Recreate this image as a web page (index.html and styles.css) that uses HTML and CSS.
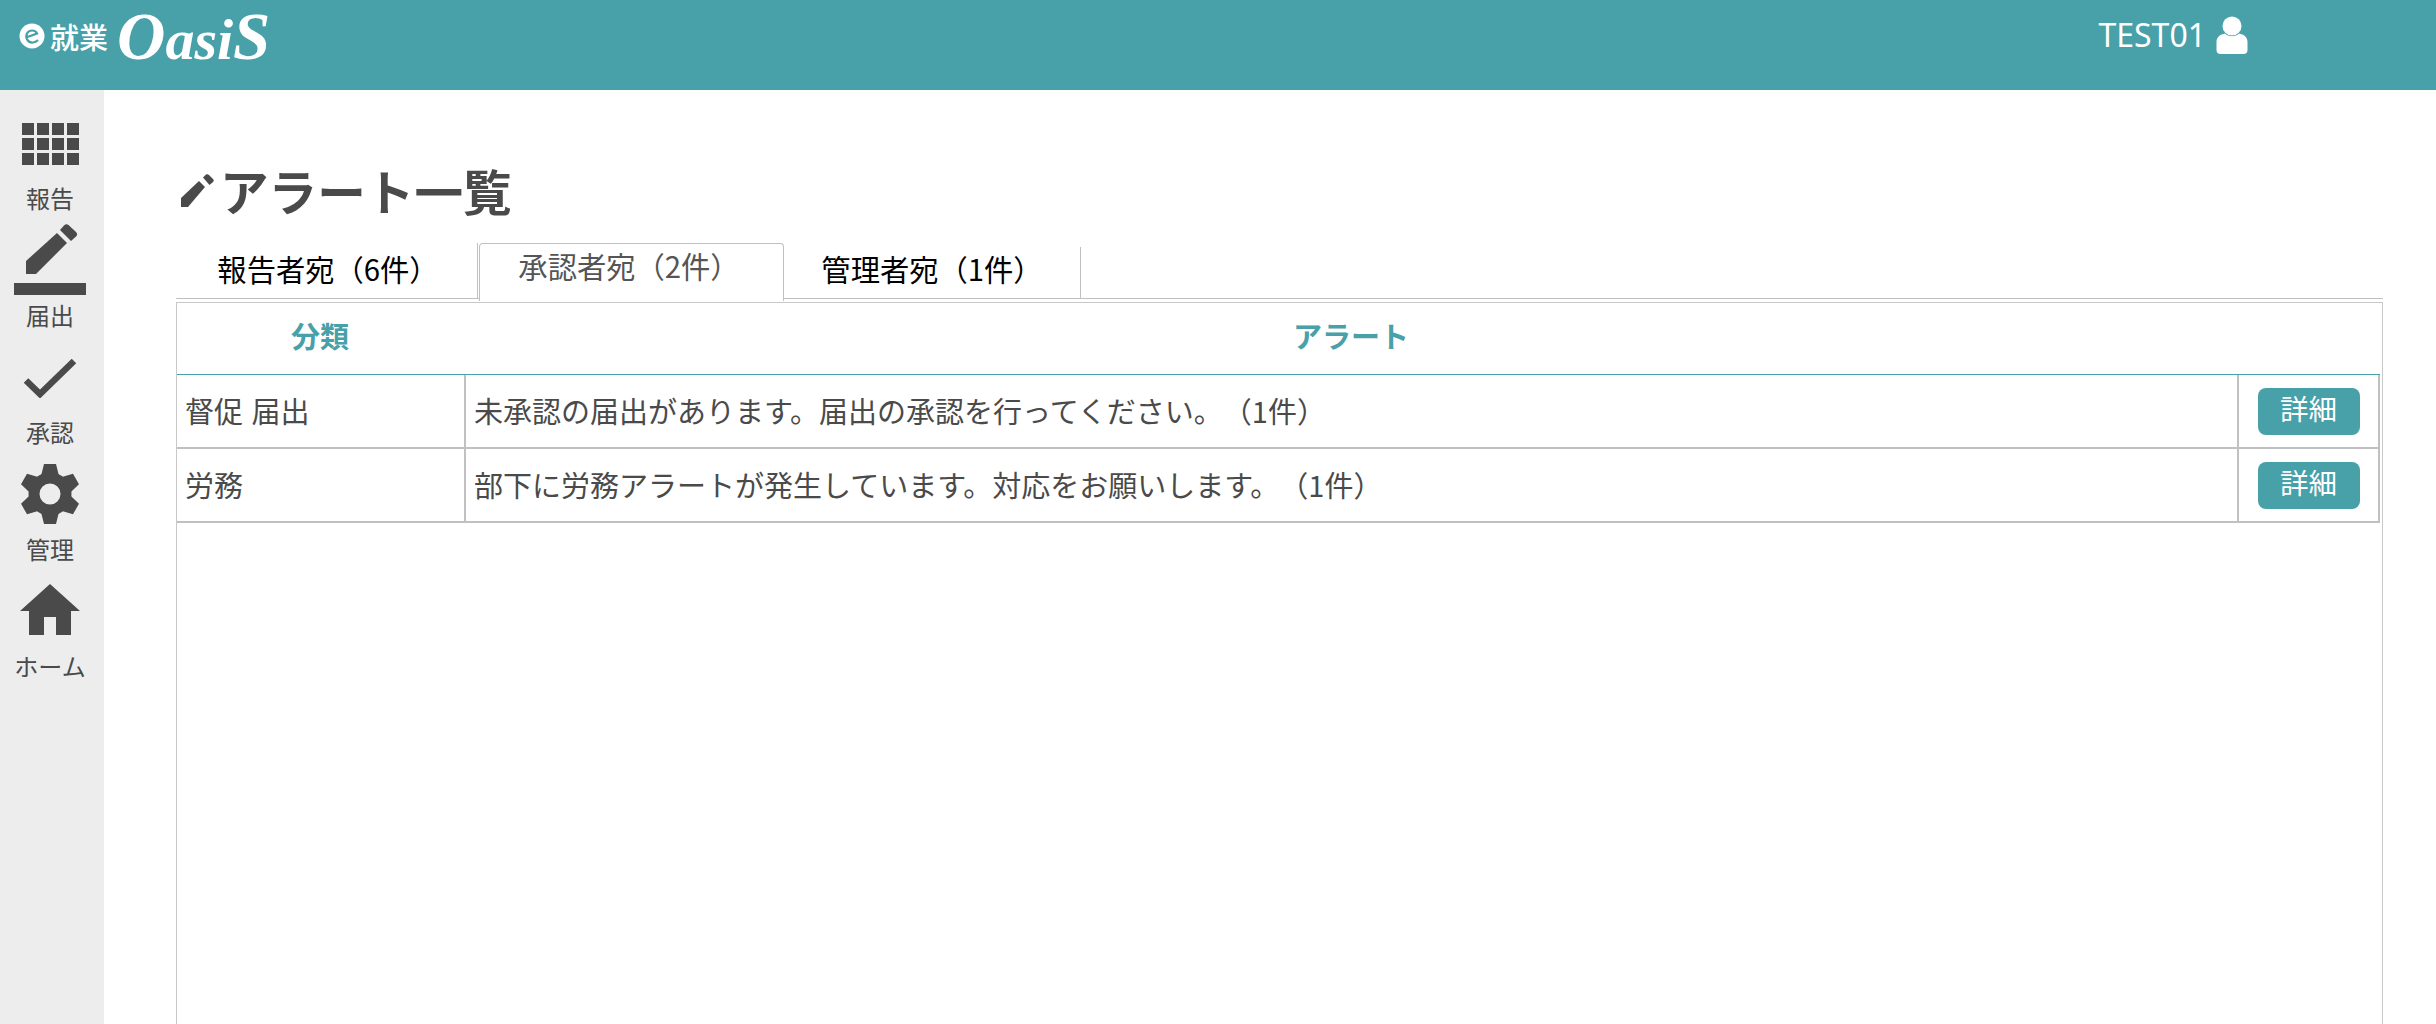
FILE: index.html
```html
<!DOCTYPE html>
<html lang="ja">
<head>
<meta charset="utf-8">
<title>アラート一覧</title>
<link rel="stylesheet" href="styles.css">
</head>
<body>
<header class="topbar">
  <div class="logo">
    <svg class="logo-e" viewBox="0 0 26 26" width="26" height="26"><circle cx="13" cy="13" r="12.500" fill="#fff"/><path d="M7 14.500 L18 10.500 C16.500 6.500 10 6.500 8 10.500 C6 15 9 20 14 19.500 C16 19.300 17.500 18.500 19 17" fill="none" stroke="#48a0a9" stroke-width="2.200"/></svg>
    <span class="logo-ja">就業</span>
    <span class="logo-en"><span class="logo-cap">O</span>asi<span class="logo-cap">S</span></span>
  </div>
  <div class="user">
    <span class="user-name">TEST01</span>
    <svg class="user-icon" viewBox="0 0 32 38" width="32" height="38"><circle cx="16" cy="10" r="9.500" fill="#fff"/><path d="M9 17.500 C12 21 20 21 23 17.500 C28 18.500 31.500 21 31.500 26 L31.500 34 C31.500 36.500 30 38 27.500 38 L4.500 38 C2 38 .5 36.500 .5 34 L.5 26 C.5 21 4 18.500 9 17.500Z" fill="#fff"/></svg>
  </div>
</header>
<div class="layout">
  <nav class="sidebar">
    <a class="nav-item">
      <span class="nav-icon nudge-down"><svg viewBox="0 0 57 42" width="57" height="42"><g fill="#4a4a4a"><rect x="0" y="0" width="12" height="12"/><rect x="15" y="0" width="12" height="12"/><rect x="30" y="0" width="12" height="12"/><rect x="45" y="0" width="12" height="12"/><rect x="0" y="15" width="12" height="12"/><rect x="15" y="15" width="12" height="12"/><rect x="30" y="15" width="12" height="12"/><rect x="45" y="15" width="12" height="12"/><rect x="0" y="30" width="12" height="12"/><rect x="15" y="30" width="12" height="12"/><rect x="30" y="30" width="12" height="12"/><rect x="45" y="30" width="12" height="12"/></g></svg></span>
      <span class="nav-label">報告</span>
    </a>
    <a class="nav-item">
      <span class="nav-icon"><svg viewBox="0 0 72 72" width="72" height="72"><g fill="#4a4a4a"><path d="M12 38 L43 10 L53 20 L22 51 L12 51Z"/><path d="M46 7 L50 2.500 C51.500 1 53 1 54.500 2 L62 9 C63.500 10.500 63.500 12 62 13.500 L57 18Z"/><rect x="0" y="60" width="72" height="12"/></g></svg></span>
      <span class="nav-label">届出</span>
    </a>
    <a class="nav-item">
      <span class="nav-icon nudge-down"><svg viewBox="0 0 54 40" width="54" height="40"><path d="M3 22.500 L17 36 L51 3" fill="none" stroke="#4a4a4a" stroke-width="6.500"/></svg></span>
      <span class="nav-label">承認</span>
    </a>
    <a class="nav-item">
      <span class="nav-icon nudge-down-small"><svg viewBox="0 0 60 60" width="60" height="60"><circle cx="30" cy="30" r="16" fill="none" stroke="#4a4a4a" stroke-width="11"/><g fill="#4a4a4a"><path d="M24 0 L36 0 L39 12 L21 12Z"/><path d="M24 0 L36 0 L39 12 L21 12Z" transform="rotate(60 30 30)"/><path d="M24 0 L36 0 L39 12 L21 12Z" transform="rotate(120 30 30)"/><path d="M24 0 L36 0 L39 12 L21 12Z" transform="rotate(180 30 30)"/><path d="M24 0 L36 0 L39 12 L21 12Z" transform="rotate(240 30 30)"/><path d="M24 0 L36 0 L39 12 L21 12Z" transform="rotate(300 30 30)"/></g></svg></span>
      <span class="nav-label">管理</span>
    </a>
    <a class="nav-item">
      <span class="nav-icon nudge-up"><svg viewBox="0 0 60 51" width="60" height="51"><path d="M30 0 L60 27 L51 27 L51 51 L36 51 L36 33 L24 33 L24 51 L9 51 L9 27 L0 27Z" fill="#4a4a4a"/></svg></span>
      <span class="nav-label">ホーム</span>
    </a>
  </nav>
  <main class="content">
    <h1 class="page-title">
      <svg viewBox="0 0 33 33" width="33" height="33"><g fill="#4a4a4a"><path d="M0 24 L18 7 L24 13 L7 33 L0 33Z"/><path d="M22 3.500 L25 .5 C26 0 27 0 28 1 L32 5 C33 6 33 7 32 8 L28.500 11Z"/></g></svg>
      <span>アラート一覧</span>
    </h1>
    <div class="tabs">
      <a class="tab tab-first">報告者宛（6件）</a>
      <a class="tab tab-active">承認者宛（2件）</a>
      <a class="tab tab-third">管理者宛（1件）</a>
    </div>
    <section class="panel">
      <table class="alerts">
        <colgroup><col class="col-kind"><col><col class="col-action"></colgroup>
        <thead>
          <tr><th>分類</th><th>アラート</th><th></th></tr>
        </thead>
        <tbody>
          <tr>
            <td class="kind">督促 届出</td>
            <td>未承認の届出があります。届出の承認を行ってください。（1件）</td>
            <td class="action"><button class="detail">詳細</button></td>
          </tr>
          <tr>
            <td class="kind">労務</td>
            <td>部下に労務アラートが発生しています。対応をお願いします。（1件）</td>
            <td class="action"><button class="detail">詳細</button></td>
          </tr>
        </tbody>
      </table>
    </section>
  </main>
</div>
</body>
</html>
```
FILE: styles.css
```css
* { box-sizing: border-box; }
html, body { height: 100%; }
body {
  margin: 0;
  overflow: hidden;
  display: flex;
  flex-direction: column;
  font-family: "Noto Sans CJK JP", "Noto Sans", sans-serif;
  text-spacing-trim: space-all;
  color: #4a4a4a;
  background: #fff;
}
.topbar {
  flex: none;
  height: 90px;
  background: #48a0a9;
  display: flex;
  justify-content: space-between;
  align-items: flex-start;
  color: #fff;
}
.logo {
  display: flex;
  align-items: center;
  height: 72px;
  padding-left: 19px;
}
.logo-e { margin-right: 5px; }
.logo-ja { font-size: 29px; font-weight: 500; line-height: 1; margin-right: 9px; }
.logo-en {
  font-family: "Liberation Serif", serif;
  font-style: italic;
  font-weight: 700;
  font-size: 58px;
  line-height: 1;
}
.logo-cap { font-size: 67px; }
.user {
  display: flex;
  align-items: center;
  gap: 10px;
  padding: 16px 188px 0 0;
}
.user-name { font-family: "Noto Sans", sans-serif; font-size: 32px; line-height: 38px; }
.layout { flex: 1; display: flex; min-height: 0; }
.sidebar {
  flex: none;
  width: 104px;
  background: #ededed;
  padding: 12px 4px 0 0;
}
.nav-item {
  display: flex;
  flex-direction: column;
  align-items: center;
  height: 117px;
}
.nav-icon { height: 80px; display: flex; align-items: center; justify-content: center; }
.nav-icon svg { display: block; }
.nudge-down { padding-top: 4px; }
.nudge-down-small { padding-top: 2px; }
.nudge-up { padding-bottom: 2px; }
.nav-label { font-size: 24px; line-height: 32px; color: #4a4a4a; }
.content {
  flex: 1;
  min-width: 0;
  display: flex;
  flex-direction: column;
  padding: 56px 53px 0 72px;
}
.page-title {
  margin: 0 0 9px;
  display: flex;
  align-items: center;
  gap: 6px;
  height: 88px;
  padding-left: 5px;
  font-size: 48.6px;
  font-weight: 700;
  line-height: 1;
  color: #4a4a4a;
}
.tabs {
  display: flex;
  align-items: flex-end;
  border-bottom: 1px solid #c0c0c0;
  height: 56px;
}
.tab {
  display: flex;
  align-items: center;
  justify-content: center;
  font-size: 29.3px;
  color: #000;
  height: 51px;
  padding-bottom: 10px;
}
.tab-first {
  width: 302px;
  height: 55px;
  padding: 0 0 6px 3px;
  border-right: 1px solid #c0c0c0;
}
.tab-active {
  width: 305px;
  height: 58px;
  margin: 0 0 -3px 1px;
  padding: 0 5px 15px 0;
  background: #fff;
  color: #555;
  border: 1px solid #c0c0c0;
  border-bottom: none;
  border-radius: 4px 4px 0 0;
}
.tab-third { width: 297px; border-right: 1px solid #c0c0c0; }
.panel {
  flex: 1;
  margin-top: 3px;
  border: 1px solid #c8c8c8;
  border-bottom: none;
  padding-right: 2px;
  background: #fff;
}
.alerts {
  width: 100%;
  border-collapse: separate;
  border-spacing: 0;
  table-layout: fixed;
  font-size: 29px;
}
.col-kind { width: 289px; }
.col-action { width: 141px; }
.alerts th {
  height: 72px;
  padding: 0 3px 7px 0;
  font-size: 29px;
  font-weight: 700;
  color: #48a0a9;
  border-bottom: 1px solid #48a0a9;
}
.alerts td {
  height: 74px;
  padding: 0 0 3px 8px;
  border-bottom: 2px solid #c0c0c0;
  border-right: 2px solid #c0c0c0;
  white-space: nowrap;
}
.alerts td.kind { word-spacing: 2px; }
.alerts td.action { padding: 0; text-align: center; }
.detail {
  display: block;
  width: 102px;
  height: 47px;
  margin: 0 auto;
  padding: 0 0 7px;
  border: none;
  border-radius: 8px;
  background: #48a0a9;
  color: #fff;
  font-family: inherit;
  font-size: 28.5px;
  line-height: 40px;
}
```
